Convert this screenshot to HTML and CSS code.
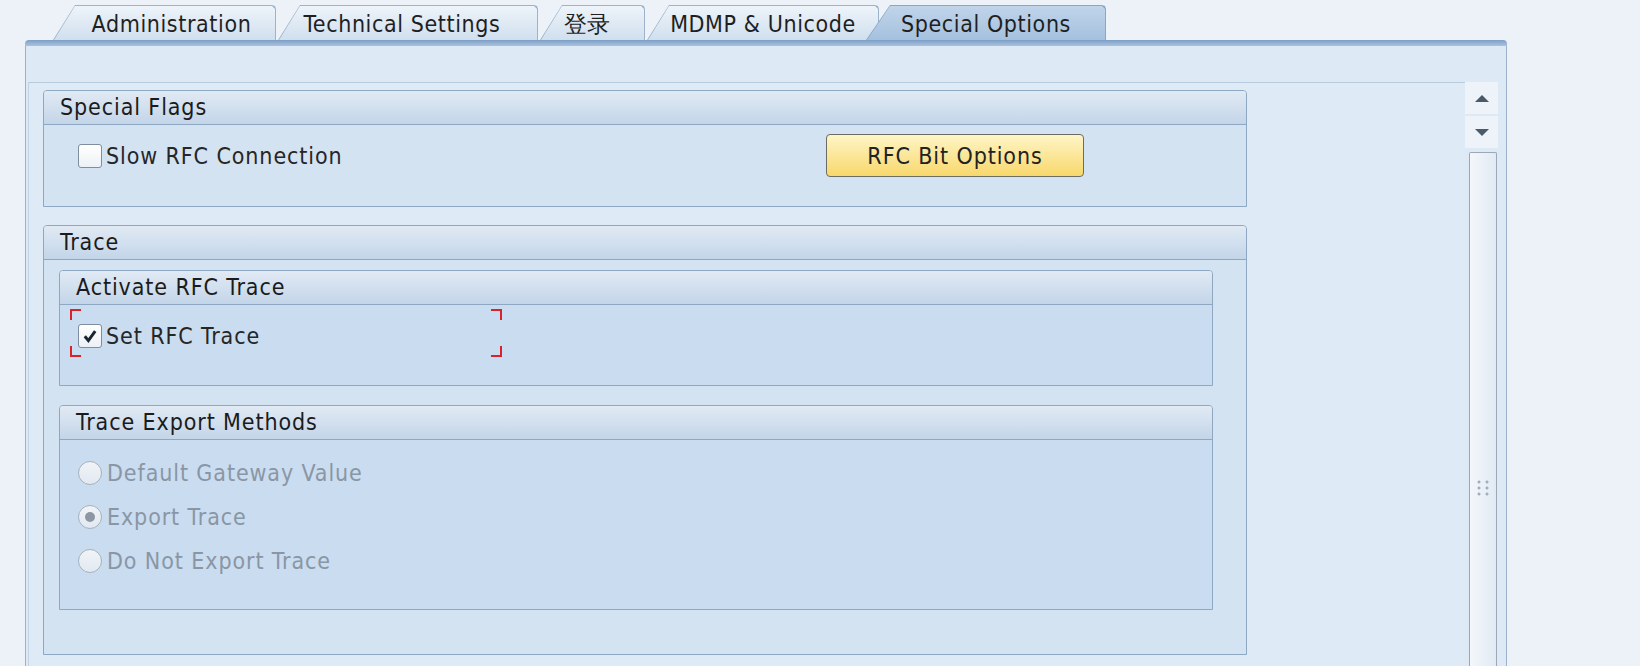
FILE: index.html
```html
<!DOCTYPE html>
<html lang="en">
<head>
    <meta charset="UTF-8">
    <title>RFC Destination - Special Options</title>
    <link rel="stylesheet" href="styles.css">
</head>
<body>
    <div class="screen">
        <!-- Tab strip -->
        <div class="tabs">
            <div class="tab tab-admin"><span>Administration</span></div>
            <div class="tab tab-tech"><span>Technical Settings</span></div>
            <div class="tab tab-login"><span>登录</span></div>
            <div class="tab tab-mdmp"><span>MDMP &amp; Unicode</span></div>
            <div class="tab tab-special active"><span>Special Options</span></div>
        </div>
        <div class="tab-rule"></div>

        <!-- Tab page -->
        <div class="panel">
            <div class="scroll-area">
                <div class="scroll-content">
                    <section class="group">
                        <div class="group-head">Special Flags</div>
                        <div class="group-body flags-body">
                            <label class="check slow">
                                <span class="box"></span>
                                Slow RFC Connection
                            </label>
                            <button class="btn">RFC Bit Options</button>
                        </div>
                    </section>

                    <section class="group trace">
                        <div class="group-head">Trace</div>
                        <div class="group-body trace-body">
                            <section class="group inner">
                                <div class="group-head">Activate RFC Trace</div>
                                <div class="group-body activate-body">
                                    <div class="focus">
                                        <label class="check">
                                            <span class="box">
                                                <svg width="16" height="16" viewBox="0 0 16 16"><path d="M2.8 8.2 L6.4 12.6 L13.2 3.2" fill="none" stroke="#1b2531" stroke-width="3"/></svg>
                                            </span>
                                            Set RFC Trace
                                        </label>
                                    </div>
                                </div>
                            </section>

                            <section class="group inner">
                                <div class="group-head">Trace Export Methods</div>
                                <div class="group-body export-body">
                                    <div class="radio"><span class="dot"></span>Default Gateway Value</div>
                                    <div class="radio"><span class="dot on"></span>Export Trace</div>
                                    <div class="radio"><span class="dot"></span>Do Not Export Trace</div>
                                </div>
                            </section>
                        </div>
                    </section>
                </div>

                <!-- Vertical scrollbar -->
                <div class="scrollbar">
                    <div class="sb-btn up"></div>
                    <div class="sb-btn down"></div>
                    <div class="sb-track"><div class="grip"></div></div>
                </div>
            </div>
        </div>
    </div>
</body>
</html>
```

FILE: styles.css
```css
* {
    box-sizing: border-box;
}

html,
body {
    margin: 0;
    height: 666px;
    overflow: hidden;
}

body {
    background-color: #ecf2f8;
    font-family: "DejaVu Sans Condensed", "DejaVu Sans", sans-serif;
    font-stretch: condensed;
    font-size: 23px;
    letter-spacing: 0.9px;
    color: #262626;
}

.screen {
    width: 1507px;
    padding: 5px 0 0 25px;
}

/* Tabs */
.tabs {
    display: flex;
    height: 35px;
    padding-left: 28px;
    gap: 2px;
}

.tab {
    --slant: 22px;
    position: relative;
    height: 35px;
    padding-top: 3px;
    line-height: 32px;
    letter-spacing: 0.6px;
    text-align: center;
    white-space: nowrap;
    color: #1f1f1f;
    background-color: #9cb3cb;
    clip-path: polygon(0 100%, var(--slant) 0, calc(100% - 4px) 0, calc(100% - 1px) 1px, 100% 4px, 100% 100%);
}

.tab::before {
    content: "";
    position: absolute;
    top: 1px;
    left: 1px;
    right: 1px;
    bottom: 0;
    background: linear-gradient(#eef4fa, #d0dfee);
    clip-path: polygon(0 100%, calc(var(--slant) - 1px) 0, calc(100% - 3px) 0, 100% 3px, 100% 100%);
}

.tab span {
    position: relative;
}

.tab-admin {
    width: 223px;
    padding-left: 14px;
}

.tab-tech {
    width: 260px;
    padding-right: 12px;
}

.tab-login {
    width: 105px;
    padding-right: 10px;
}

.tab-mdmp {
    width: 232px;
}

.tab-special {
    --slant: 24px;
    width: 240px;
    margin-left: -15px;
    background-color: #87a6c8;
}

.tab-special::before {
    background: linear-gradient(#c0d4ea, #a5c1de);
}

.tab-rule {
    height: 6px;
    background: linear-gradient(#7d9fc6, #a9c3df);
    border-radius: 4px 4px 0 0;
}

/* Tab page */
.panel {
    height: 620px;
    padding: 36px 8px 0 2px;
    background-color: #dde9f4;
    border-left: 1px solid #9cb2c9;
    border-right: 1px solid #9cb2c9;
}

.scroll-area {
    display: flex;
    height: 100%;
}

.scroll-content {
    flex: 1;
    padding: 7px 0 0 14px;
    background-color: #deeaf5;
    border-top: 1px solid #b8cadd;
    border-left: 1px solid #c3d3e3;
}

/* Group boxes */
.group {
    width: 1204px;
    background-color: #d4e3f2;
    border: 1px solid #8ea7c2;
    border-radius: 4px 4px 0 0;
}

.group-head {
    height: 34px;
    padding-left: 16px;
    line-height: 33px;
    color: #1b1b1b;
    background: linear-gradient(#e1eaf4, #c3d5e9);
    border-bottom: 1px solid #8ea7c2;
    border-radius: 3px 3px 0 0;
}

.flags-body {
    display: flex;
    align-items: center;
    padding: 9px 0 29px 34px;
}

.check {
    display: flex;
    align-items: center;
    gap: 4px;
    white-space: nowrap;
}

.check.slow {
    flex: 0 0 748px;
}

.box {
    display: flex;
    align-items: center;
    justify-content: center;
    width: 24px;
    height: 24px;
    background: linear-gradient(#ffffff, #edf1f5);
    border: 1px solid #7f8d9e;
    border-radius: 3px;
}

.btn {
    width: 258px;
    height: 43px;
    padding: 0;
    font: inherit;
    letter-spacing: 0.9px;
    color: #222;
    background: linear-gradient(#fff5c6, #f8d86c);
    border: 1px solid #6c6c64;
    border-radius: 4px;
}

.trace {
    margin-top: 18px;
}

.trace-body {
    padding: 10px 33px 44px 15px;
}

.inner {
    width: auto;
    background-color: #c9dcf0;
}

.inner + .inner {
    margin-top: 19px;
}

.activate-body {
    padding: 4px 0 28px 10px;
}

/* red focus corners */
.focus {
    display: flex;
    align-items: center;
    width: 432px;
    height: 48px;
    padding: 5px 0 0 8px;
    background:
        linear-gradient(#d8232a, #d8232a) left top / 11px 2px no-repeat,
        linear-gradient(#d8232a, #d8232a) left top / 2px 11px no-repeat,
        linear-gradient(#d8232a, #d8232a) right top / 11px 2px no-repeat,
        linear-gradient(#d8232a, #d8232a) right top / 2px 11px no-repeat,
        linear-gradient(#d8232a, #d8232a) left bottom / 11px 2px no-repeat,
        linear-gradient(#d8232a, #d8232a) left bottom / 2px 11px no-repeat,
        linear-gradient(#d8232a, #d8232a) right bottom / 11px 2px no-repeat,
        linear-gradient(#d8232a, #d8232a) right bottom / 2px 11px no-repeat;
}

.export-body {
    padding: 11px 0 26px 18px;
}

.radio {
    display: flex;
    align-items: center;
    gap: 5px;
    height: 44px;
    color: #8a96a4;
}

.dot {
    display: flex;
    align-items: center;
    justify-content: center;
    width: 24px;
    height: 24px;
    background: linear-gradient(#f0f4f8, #e2e9f0);
    border: 1px solid #a7b1bc;
    border-radius: 50%;
}

.dot.on::after {
    content: "";
    width: 10px;
    height: 10px;
    background-color: #8d97a3;
    border-radius: 50%;
}

/* Scrollbar */
.scrollbar {
    width: 33px;
    display: flex;
    flex-direction: column;
    gap: 2px;
}

.sb-btn {
    flex: none;
    display: flex;
    align-items: center;
    justify-content: center;
    height: 32px;
    background-color: #edf3f9;
}

.sb-btn::before {
    content: "";
    border-left: 7px solid transparent;
    border-right: 7px solid transparent;
}

.up::before {
    border-bottom: 7px solid #4b5a69;
}

.down::before {
    border-top: 7px solid #4b5a69;
}

.sb-track {
    flex: 1;
    width: 28px;
    margin: 2px 0 0 4px;
    padding-top: 326px;
    background: linear-gradient(90deg, #f3f7fb, #e1eaf3);
    border: 1px solid #9ca8b5;
    border-bottom: none;
    border-radius: 2px 2px 0 0;
}

.grip {
    width: 16px;
    height: 18px;
    margin: 0 auto;
    background-image: radial-gradient(circle, #a1adbb 1.2px, transparent 1.8px);
    background-size: 8px 6px;
}
```
